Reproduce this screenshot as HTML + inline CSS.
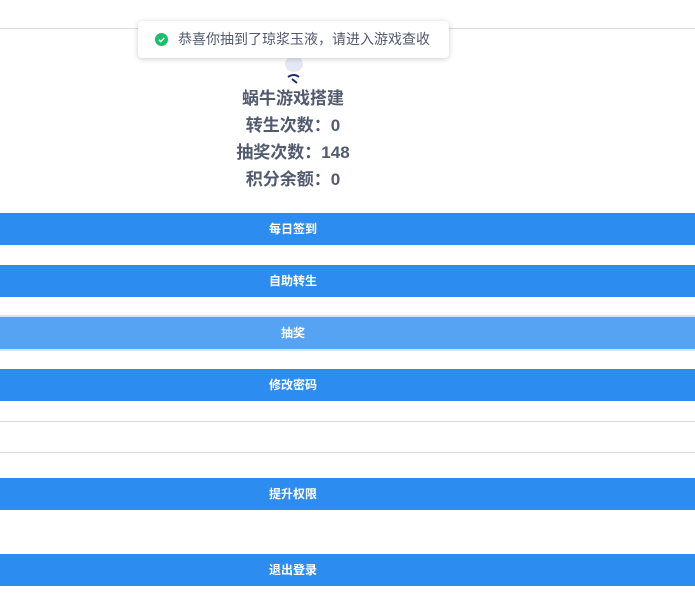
<!DOCTYPE html>
<html><head><meta charset="utf-8"><style>
body{margin:0;width:695px;height:608px;background:#fff;position:relative;overflow:hidden;font-family:"Liberation Sans","Noto Sans CJK SC",sans-serif}
.abs{position:absolute}
.line{position:absolute;left:0;width:695px;height:1px;background:#dcdcdc}
.btn{position:absolute;left:0;width:695px;height:32px;background:#2d8cf0;color:#fff;font-size:12px;font-weight:bold;line-height:32px}
.btn span{position:absolute;left:0;width:586px;text-align:center}
.t{position:absolute;left:0;width:586px;text-align:center;font-size:17px;font-weight:bold;color:#515a6e}
</style></head><body>
<div class="line" style="top:28px"></div>
<div class="abs" style="left:283px;top:55px;width:22px;height:30px">
<svg width="22" height="30"><ellipse cx="11" cy="9" rx="9" ry="8" fill="#e4e8f4"/><path d="M5 22 Q11 18 16 22 M9 24 L14 28" stroke="#1d2f6a" stroke-width="2" fill="none"/></svg></div>
<div class="abs" style="left:138px;top:21px;width:311px;height:37px;background:#fff;border-radius:4px;box-shadow:0 1px 6px rgba(0,0,0,.2);font-size:14px;color:#515a6e;line-height:37px">
<span class="abs" style="left:17px;top:12px;width:13px;height:13px;border-radius:50%;background:#19be6b"></span>
<svg class="abs" style="left:17px;top:12px" width="13" height="13"><path d="M3.8 6.7 L5.8 8.6 L9.3 4.8" stroke="#fff" stroke-width="1.4" fill="none"/></svg>
<span class="abs" style="left:40px;top:0">恭喜你抽到了琼浆玉液，请进入游戏查收</span></div>
<div class="t" style="top:84px">蜗牛游戏搭建</div>
<div class="t" style="top:111px">转生次数：0</div>
<div class="t" style="top:138px">抽奖次数：148</div>
<div class="t" style="top:165px">积分余额：0</div>
<div class="btn" style="top:213px"><span>每日签到</span></div>
<div class="btn" style="top:265px"><span>自助转生</span></div>
<div class="btn" style="top:315px;height:2px;background:#d5e6f8"></div>
<div class="btn" style="top:317px;background:#57a3f3"><span>抽奖</span></div>
<div class="btn" style="top:349px;height:2px;background:#d5e6f8"></div>
<div class="btn" style="top:369px"><span>修改密码</span></div>
<div class="line" style="top:421px"></div>
<div class="line" style="top:452px"></div>
<div class="btn" style="top:478px"><span>提升权限</span></div>
<div class="btn" style="top:554px"><span>退出登录</span></div>
</body></html>
